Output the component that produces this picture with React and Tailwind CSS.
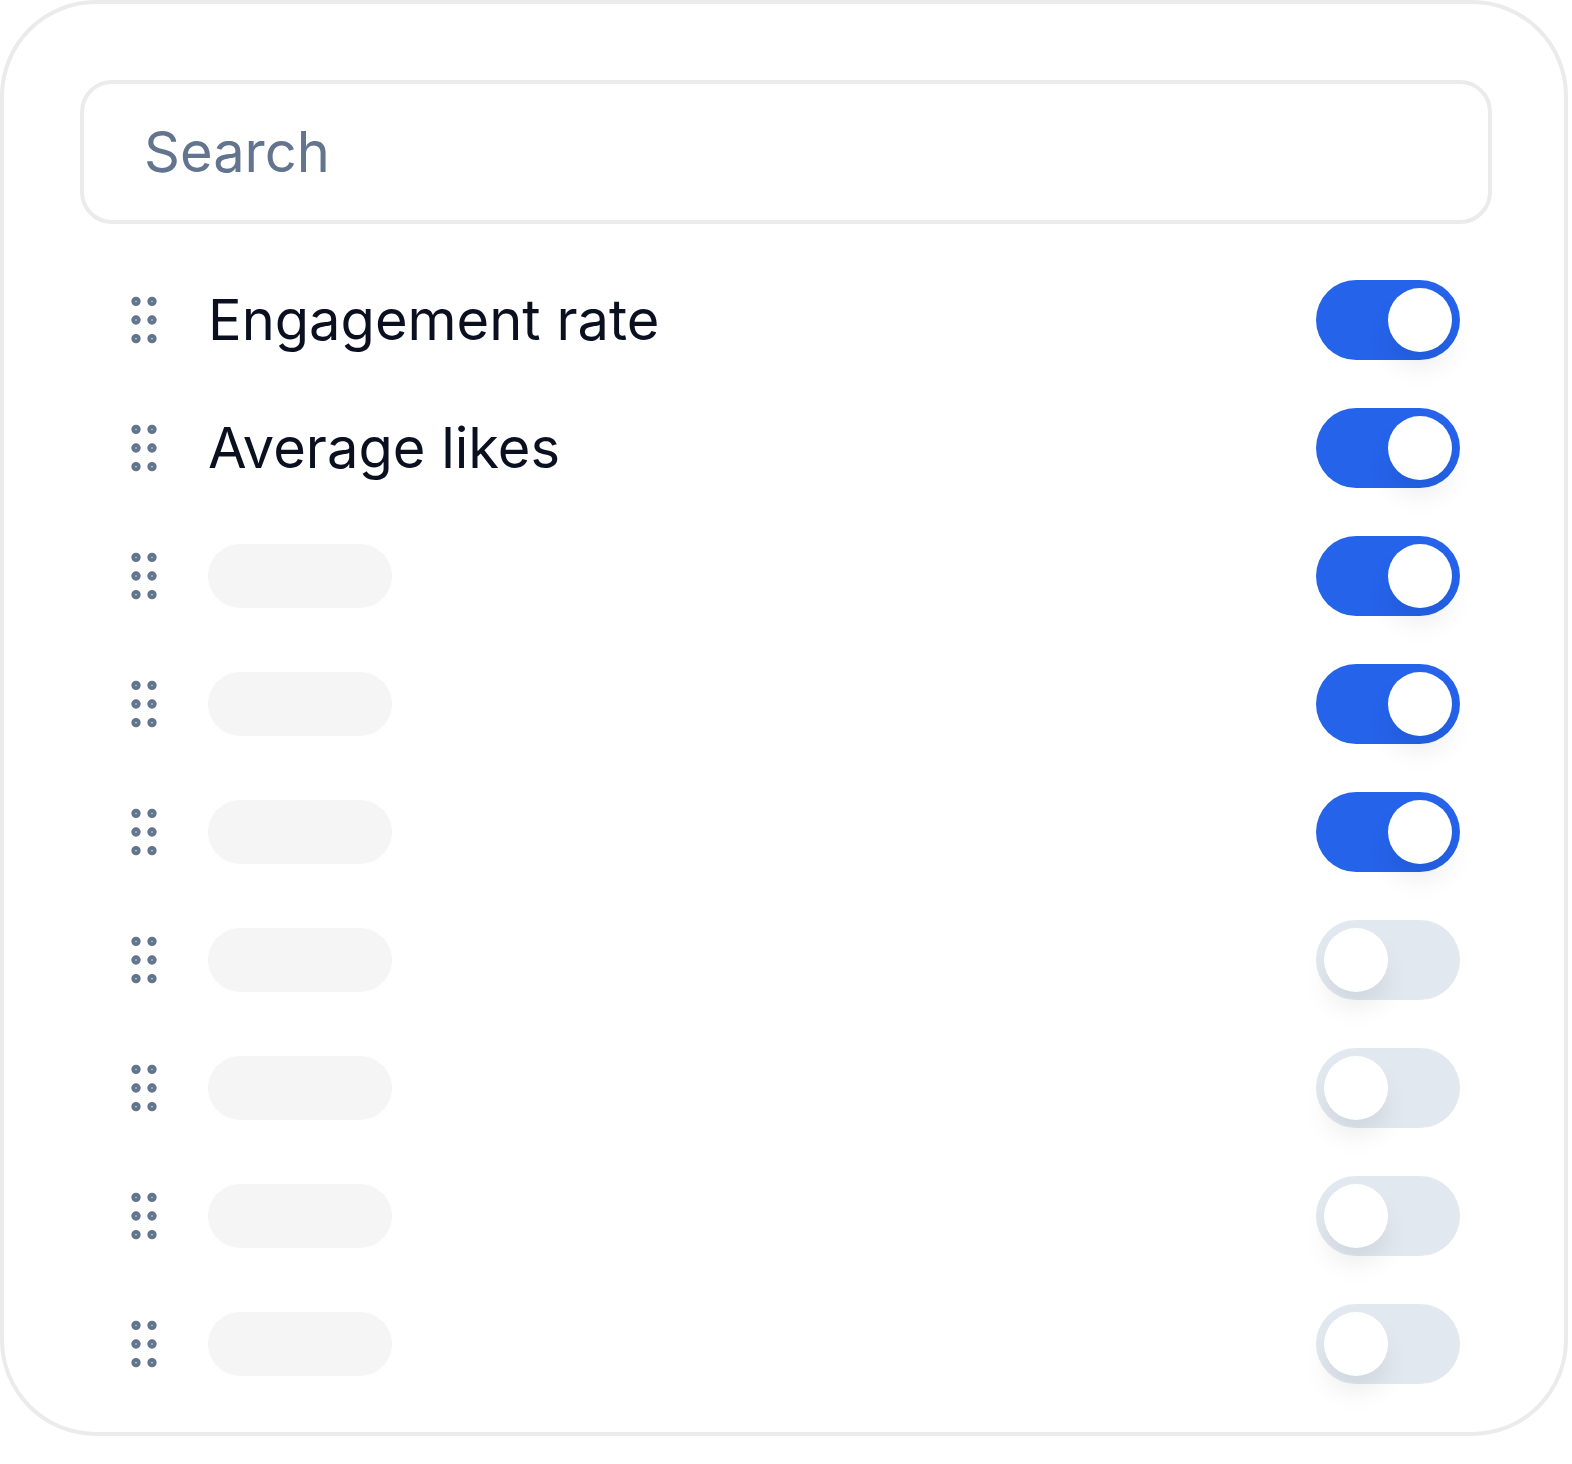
import { useState } from "react";

const rows = [
  { label: "Engagement rate", on: true },
  { label: "Average likes", on: true },
  { label: null, on: true },
  { label: null, on: true },
  { label: null, on: true },
  { label: null, on: false },
  { label: null, on: false },
  { label: null, on: false },
  { label: null, on: false },
];

function Grip() {
  return (
    <svg width="64" height="64" viewBox="0 0 24 24" fill="none" stroke="#62748e" strokeWidth="1.5" className="shrink-0">
      <circle cx="9" cy="5" r="1" />
      <circle cx="9" cy="12" r="1" />
      <circle cx="9" cy="19" r="1" />
      <circle cx="15" cy="5" r="1" />
      <circle cx="15" cy="12" r="1" />
      <circle cx="15" cy="19" r="1" />
    </svg>
  );
}

function Toggle({ on, onClick }) {
  return (
    <button
      onClick={onClick}
      className={
        on
          ? "flex w-[144px] h-[80px] shrink-0 items-center justify-end rounded-full bg-[#2563eb] p-[8px]"
          : "flex w-[144px] h-[80px] shrink-0 items-center justify-start rounded-full bg-[#e2e8f0] p-[8px]"
      }
    >
      <span className="block w-[64px] h-[64px] rounded-full bg-white shadow-[0_18px_30px_-6px_rgba(0,0,0,0.1)]" />
    </button>
  );
}

export default function App() {
  const [items, setItems] = useState(rows);

  function flip(i) {
    setItems(items.map((r, j) => (j === i ? { ...r, on: !r.on } : r)));
  }

  return (
    <div className="bg-white font-['Inter',sans-serif]">
      <div className="w-[1568px] rounded-[96px] border-4 border-[#ebebeb] bg-white pt-[76px] pb-[24px] pl-[76px] pr-[72px]">
        <div className="flex h-[144px] items-center rounded-[32px] border-4 border-[#ebebeb] pl-[60px]">
          <input
            placeholder="Search"
            className="w-full bg-transparent text-[56px] text-slate-900 outline-none placeholder:text-[#62748e]"
          />
        </div>

        <div className="mt-[32px] flex flex-col">
          {items.map((r, i) => (
            <div key={i} className="flex h-[128px] items-center px-[32px]">
              <Grip />
              <div className="ml-[32px] flex-1">
                {r.label ? (
                  <span className="text-[56px] leading-none text-[#0b1020]">{r.label}</span>
                ) : (
                  <div className="h-[64px] w-[184px] rounded-full bg-[#f5f5f5]" />
                )}
              </div>
              <Toggle on={r.on} onClick={() => flip(i)} />
            </div>
          ))}
        </div>
      </div>
    </div>
  );
}
